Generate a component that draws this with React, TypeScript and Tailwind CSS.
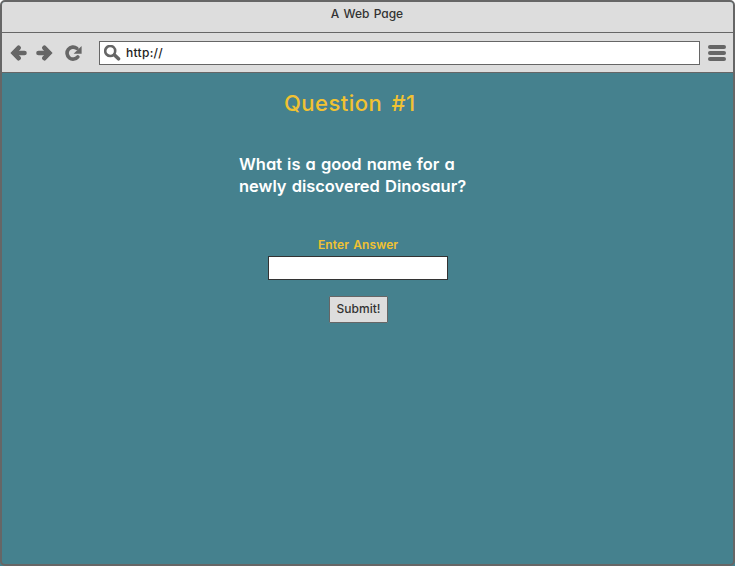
function Arrow({ className = "" }: { className?: string }) {
  return (
    <svg className={className} width="17" height="16" viewBox="0 0 17 16" fill="none" stroke="#666" strokeWidth="4.6">
      <path d="M14.5 8H4" strokeLinecap="round" />
      <path d="M8.6 2.8 3.6 8l5 5.2" strokeLinecap="round" strokeLinejoin="miter" />
    </svg>
  );
}

function Refresh() {
  return (
    <svg className="ml-3 shrink-0" width="17" height="16" viewBox="0 0 17 16">
      <path d="M11.8 3.4A6 6 0 1 0 12.8 11.8" fill="none" stroke="#666" strokeWidth="3.6" strokeLinecap="round" />
      <path d="M16.6 1V8.8H8.6Z" fill="#666" />
    </svg>
  );
}

function Search() {
  return (
    <svg width="17" height="16" viewBox="0 0 17 16" fill="none" stroke="#666">
      <circle cx="6.2" cy="6" r="5" strokeWidth="2.6" />
      <path d="m10.5 10 4 3.8" strokeWidth="3.6" strokeLinecap="round" />
    </svg>
  );
}

export default function App() {
  return (
    <div className="flex h-[566px] w-[735px] bg-[linear-gradient(#fff_50%,#45818e_50%)] font-['Inter',sans-serif] [font-feature-settings:'cv11'_1]">
      <div className="flex w-full flex-col overflow-hidden rounded-[5px] border-2 border-[#666] bg-[#45818e]">
        <header className="flex h-[31px] shrink-0 justify-center border-b border-[#666] bg-[#ddd] pt-[3px] text-[12px] leading-[18px] font-medium text-[#333]">
          <h1 className="-ml-px whitespace-nowrap [word-spacing:1px]">A Web Page</h1>
        </header>
        <nav className="flex h-10 shrink-0 items-center border-b border-[#666] bg-[#ddd] pl-2">
          <Arrow className="shrink-0" />
          <Arrow className="ml-[9px] shrink-0 rotate-180" />
          <Refresh />
          <div className="ml-[17px] flex h-6 w-[601px] shrink-0 items-center border border-[#666] bg-white pl-1 text-[12px] font-medium text-[#222]">
            <Search />
            <span className="ml-[5px] pt-px tracking-[0.3px]">http://</span>
          </div>
          <div className="ml-2 flex w-[18px] shrink-0 flex-col gap-[2px]">
            <i className="h-1 rounded-sm bg-[#666]" />
            <i className="h-1 rounded-sm bg-[#666]" />
            <i className="h-1 rounded-sm bg-[#666]" />
          </div>
        </nav>
        <main className="flex flex-col items-start">
          <h2 className="mt-[14px] ml-[282px] text-[22px] leading-[32px] font-medium tracking-[0.45px] whitespace-nowrap text-[#f1c232] [word-spacing:3px]">Question #1</h2>
          <p className="mt-[34px] ml-[237px] text-[16.5px] leading-[22px] font-semibold tracking-[-0.02px] whitespace-nowrap text-white [word-spacing:1px]">
            What is a good name for a<br />newly discovered Dinosaur?
          </p>
          <label htmlFor="answer" className="mt-[39px] ml-[316px] text-[12px] leading-[18px] font-semibold tracking-[0.1px] whitespace-nowrap text-[#f1c232] [word-spacing:1px]">Enter Answer</label>
          <input id="answer" className="mt-[2px] ml-[266px] h-6 w-[180px] border border-[#333] bg-white" />
          <button className="mt-4 ml-[327px] flex h-[27px] w-[59px] justify-center rounded-[1px] border border-[#666] bg-[#ddd] pt-[3px] text-[12px] leading-[18px] font-medium text-[#333]">Submit!</button>
        </main>
      </div>
    </div>
  );
}
